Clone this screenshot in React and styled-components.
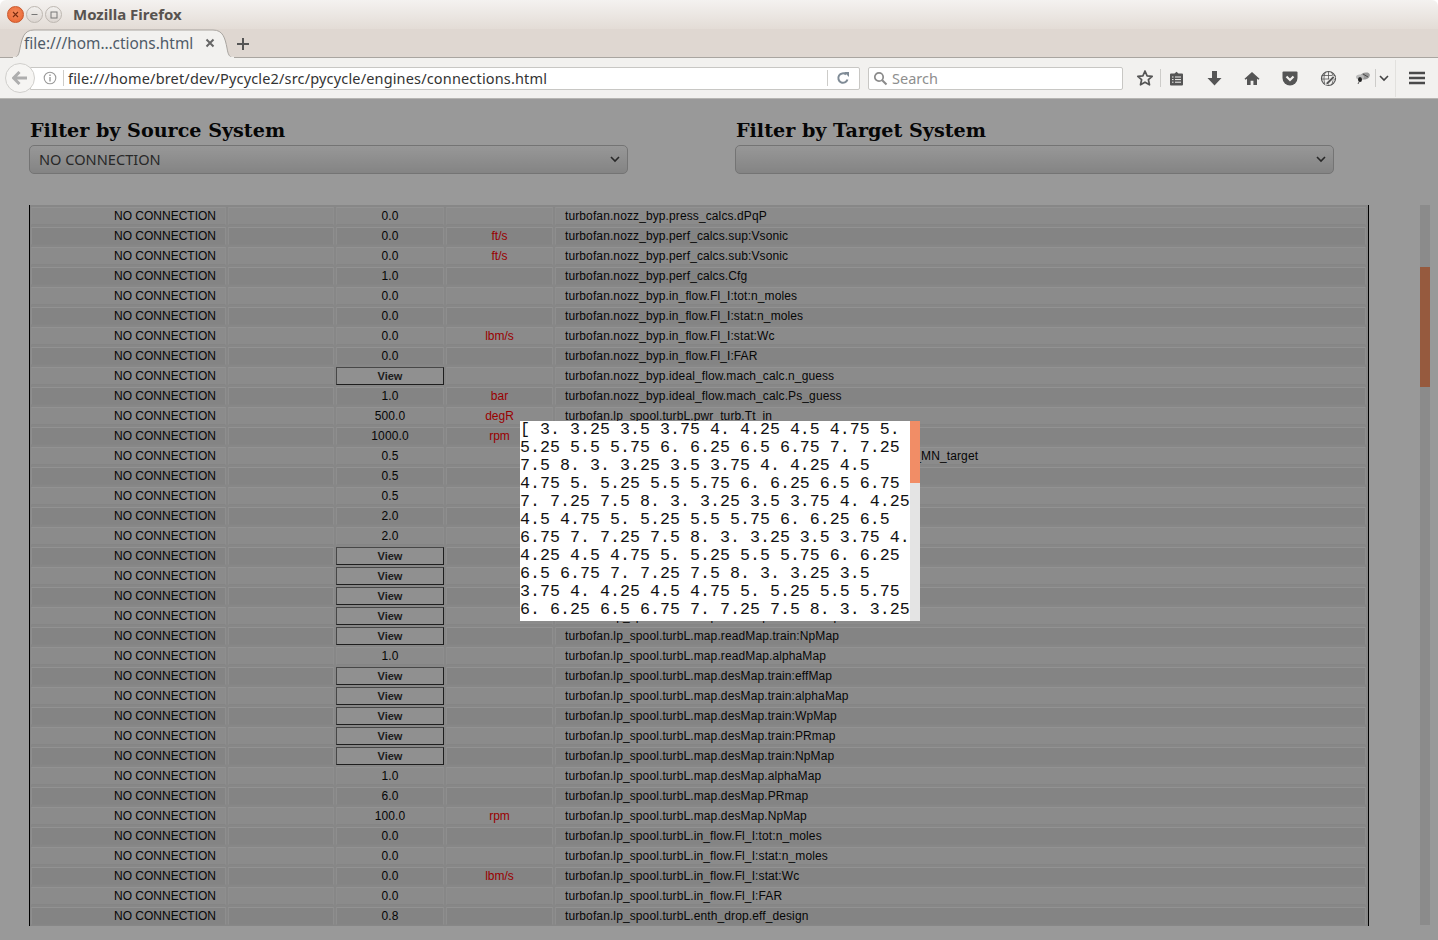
import React from 'react';
import styled, { createGlobalStyle } from 'styled-components';

const Global = createGlobalStyle`
  html, body { margin: 0; padding: 0; background: #fff; overflow: hidden; }
  #root { width: 1438px; height: 940px; }
  * { box-sizing: border-box; }
`;
const UI = '"Noto Sans", "Open Sans", sans-serif';

const Shell = styled.div`width:1438px;height:940px;display:flex;flex-direction:column;overflow:hidden;`;
const TitleBar = styled.div`height:29px;display:flex;align-items:center;padding:0 0 0 7px;background:linear-gradient(#f4f2f0,#e3dcd6);border-radius:6px 6px 0 0;`;
const WinButton = styled.span`width:17px;height:17px;margin-right:2px;border-radius:50%;display:flex;align-items:center;justify-content:center;
  background:${p=>p.$close?'radial-gradient(circle at 50% 40%,#f58a5c,#e8632f)':'linear-gradient(#f2f0ee,#dcd6d1)'};border:1px solid ${p=>p.$close?'#c9562a':'#bdb7b1'};`;
const AppTitle = styled.span`margin-left:9px;padding-bottom:2px;font:700 15px ${UI};color:#57534f;`;
const TabStrip = styled.div`height:29px;background:#dfd7d1;display:flex;align-items:flex-end;padding-left:12px;border-bottom:1px solid #a9a5a0;`;
const Tab = styled.div`position:relative;width:223px;height:29px;margin-bottom:-1px;display:flex;align-items:center;padding:0 20px 1px 12px;`;
const TabShape = styled.svg`position:absolute;left:0;top:0;`;
const TabLabel = styled.span`position:relative;font:15.4px ${UI};color:#4f5b68;flex:1;white-space:nowrap;`;
const TabClose = styled.svg`position:relative;`;
const NewTab = styled.svg`margin:0 0 6px 1px;`;
const NavBar = styled.div`height:41px;background:#f2f1ef;border-bottom:1px solid #b6b5b2;display:flex;align-items:center;padding:0 0 0 5px;`;
const BackButton = styled.div`position:relative;z-index:1;flex:none;width:30px;height:30px;border-radius:50%;background:#f6f5f3;border:1px solid #d0cfcc;display:flex;align-items:center;justify-content:center;`;
const UrlBar = styled.div`flex:none;margin-left:-5px;width:830px;height:23px;background:#fff;border:1px solid #c8c7c4;border-radius:0 2px 2px 0;display:flex;align-items:center;padding-left:12px;`;
const SiteInfo = styled.svg`flex:none;`;
const Divider = styled.span`flex:none;width:1px;height:${p=>p.$h||16}px;background:#cdccc9;margin:${p=>p.$m||'0'};`;
const UrlText = styled.span`flex:1;font:14.5px ${UI};color:#333;white-space:nowrap;letter-spacing:.16px;`;
const Reload = styled.svg`margin:0 9px 0 8px;`;
const SearchBox = styled.div`flex:none;margin-left:8px;width:255px;height:23px;background:#fff;border:1px solid #c8c7c4;border-radius:2px;display:flex;align-items:center;padding-left:4px;gap:4px;`;
const SearchText = styled.span`font:14.5px ${UI};color:#8e8e8e;`;
const Tools = styled.div`flex:none;display:flex;align-items:center;margin-left:5px;`;
const StarSlot = styled.div`width:33px;height:18px;padding-left:2px;display:flex;align-items:center;justify-content:center;border-right:1px solid #cdccc9;`;
const ToolSlot = styled.div`width:30px;height:24px;margin-right:8px;display:flex;align-items:center;justify-content:center;`;
const MothSlot = styled.div`width:25px;height:18px;display:flex;align-items:center;justify-content:center;border-right:1px solid #cdccc9;`;
const ChevronSlot = styled.div`width:20px;height:37px;display:flex;align-items:center;justify-content:flex-start;padding-left:2px;border-right:1px solid #e2e1de;`;
const MenuSlot = styled.div`width:42px;display:flex;align-items:center;justify-content:center;`;

const Page = styled.div`position:relative;flex:1;background:#fff;overflow:hidden;`;
const Filters = styled.div`display:grid;grid-template-columns:599px 599px;column-gap:107px;padding:21px 0 0 29px;height:106px;`;
const FilterGroup = styled.div`display:flex;flex-direction:column;`;
const FilterTitle = styled.h3`margin:0 0 3px 1px;font:700 19.15px/22px "DejaVu Serif",serif;color:#0a0a0a;`;
const Select = styled.div`height:29px;border:1px solid #c2c2c2;border-radius:5px;background:linear-gradient(#fdfdfd,#dcdcdc);display:flex;align-items:center;justify-content:space-between;padding:0 6px 2px 9px;font:14.6px ${UI};color:#444;`;
const Body = styled.div`display:flex;align-items:flex-start;padding-left:29px;gap:51px;`;
const Table = styled.div`width:1340px;height:721px;padding-top:1px;border-left:1px solid #000;border-right:1px solid #000;overflow:hidden;background:#e2e2e2;`;
const Row = styled.div`display:grid;grid-template-columns:195px 106px 108px 107px 811px;column-gap:2px;height:20px;padding-left:1px;`;
const Cell = styled.div`
  height:18px;margin-top:1px;background:${p=>p.$even?'#e8e8e8':'#dcdcdc'};border:1px solid #ededed;border-top-color:#f4f4f4;border-bottom-color:#dedede;
  font:12px/16px "Liberation Sans",Arial,sans-serif;color:${p=>p.$red?'#f00':'#0a0a0a'};white-space:nowrap;overflow:visible;
  letter-spacing:${p=>p.$wide?'.11px':'0'};
  text-align:${p=>p.$align||'center'};padding:${p=>p.$pad||'0'};
`;
const ViewButton = styled.div`height:18px;margin-top:1px;background:#f0f0f0;border:1px solid #333;border-top-color:#777;border-left-color:#777;text-align:center;font:700 11px/16px "Liberation Sans",Arial,sans-serif;color:#333;`;
const PageScroll = styled.div`position:relative;width:10px;height:720px;background:#e8e8e8;`;
const PageThumb = styled.div`position:absolute;left:0;top:62px;width:10px;height:120px;background:#fa9768;`;
const Overlay = styled.div`position:absolute;inset:0;background:rgba(0,0,0,.4);`;
const Modal = styled.div`position:absolute;left:520px;top:322px;width:400px;height:200px;background:#fff;display:flex;overflow:hidden;`;
const ModalText = styled.div`width:390px;height:200px;overflow:hidden;font:16.67px/18px "Liberation Mono",monospace;color:#111;white-space:normal;`;
const ModalTrack = styled.div`width:10px;height:200px;background:#e4e4e4;`;
const ModalThumb = styled.div`width:10px;height:62px;background:#f18d66;`;

const N='NO CONNECTION';
const P='turbofan.nozz_byp.', L='turbofan.lp_spool.turbL.';
const rows=[
['0.0','',P+'press_calcs.dPqP'],['0.0','ft/s',P+'perf_calcs.sup:Vsonic'],['0.0','ft/s',P+'perf_calcs.sub:Vsonic'],['1.0','',P+'perf_calcs.Cfg'],
['0.0','',P+'in_flow.Fl_I:tot:n_moles'],['0.0','',P+'in_flow.Fl_I:stat:n_moles'],['0.0','lbm/s',P+'in_flow.Fl_I:stat:Wc'],['0.0','',P+'in_flow.Fl_I:FAR'],
['V','',P+'ideal_flow.mach_calc.n_guess'],['1.0','bar',P+'ideal_flow.mach_calc.Ps_guess'],['500.0','degR',L+'pwr_turb.Tt_in'],['1000.0','rpm',L+'pwr_turb.Nmech'],
['0.5','',L+'statics.out_stat.flow_static.mach_calc.ps_MN_target'],['0.5','',L+'map.s_WpDes'],['0.5','',L+'map.s_PRdes'],['2.0','',L+'map.s_effDes'],['2.0','',L+'map.s_NpDes'],
['V','',L+'map.readMap.train:effMap'],['V','',L+'map.readMap.train:alphaMap'],['V','',L+'map.readMap.train:WpMap'],['V','',L+'map.readMap.train:PRmap'],
['V','',L+'map.readMap.train:NpMap'],['1.0','',L+'map.readMap.alphaMap'],['V','',L+'map.desMap.train:effMap'],['V','',L+'map.desMap.train:alphaMap'],['V','',L+'map.desMap.train:WpMap'],['V','',L+'map.desMap.train:PRmap'],['V','',L+'map.desMap.train:NpMap'],
['1.0','',L+'map.desMap.alphaMap'],['6.0','',L+'map.desMap.PRmap'],['100.0','rpm',L+'map.desMap.NpMap'],['0.0','',L+'in_flow.Fl_I:tot:n_moles'],['0.0','',L+'in_flow.Fl_I:stat:n_moles'],['0.0','lbm/s',L+'in_flow.Fl_I:stat:Wc'],['0.0','',L+'in_flow.Fl_I:FAR'],['0.8','',L+'enth_drop.eff_design'],
];
const modalText='[ 3. 3.25 3.5 3.75 4. 4.25 4.5 4.75 5. 5.25 5.5 5.75 6. 6.25 6.5 6.75 7. 7.25 7.5 8. 3. 3.25 3.5 3.75 4. 4.25 4.5 4.75 5. 5.25 5.5 5.75 6. 6.25 6.5 6.75 7. 7.25 7.5 8. 3. 3.25 3.5 3.75 4. 4.25 4.5 4.75 5. 5.25 5.5 5.75 6. 6.25 6.5 6.75 7. 7.25 7.5 8. 3. 3.25 3.5 3.75 4. 4.25 4.5 4.75 5. 5.25 5.5 5.75 6. 6.25 6.5 6.75 7. 7.25 7.5 8. 3. 3.25 3.5 3.75 4. 4.25 4.5 4.75 5. 5.25 5.5 5.75 6. 6.25 6.5 6.75 7. 7.25 7.5 8. 3. 3.25';

const ICON='#555';
const Chevron=()=> <svg width="12" height="8" viewBox="0 0 12 8"><path d="M2 2l4 4 4-4" fill="none" stroke="#444" strokeWidth="1.6"/></svg>;

export default function App(){
  return <Shell><Global/>
    <TitleBar>
      <WinButton $close><svg width="7" height="7" viewBox="0 0 7 7"><path d="M1 1l5 5M6 1L1 6" stroke="#7a2c10" strokeWidth="1.1"/></svg></WinButton>
      <WinButton><svg width="7" height="7" viewBox="0 0 7 7"><path d="M0.5 3.500h6" stroke="#777" strokeWidth="1"/></svg></WinButton>
      <WinButton><svg width="8" height="8" viewBox="0 0 8 8"><rect x="1" y="1" width="6" height="6" fill="none" stroke="#777"/></svg></WinButton>
      <AppTitle>Mozilla Firefox</AppTitle>
    </TitleBar>
    <TabStrip>
      <Tab>
        <TabShape width="223" height="29" viewBox="0 0 223 29"><path d="M0 29c6 0 7-4 8-10 2-10 4-18 14-18h179c10 0 12 8 14 18 1 6 2 10 8 10z" fill="#f2f1ef" stroke="#a9a5a0"/><path d="M1 28.600h221" stroke="#f2f1ef" strokeWidth="1.500"/></TabShape>
        <TabLabel>file:///hom…ctions.html</TabLabel>
        <TabClose width="10" height="10" viewBox="0 0 10 10"><path d="M1.500 1.500l7 7M8.500 1.500l-7 7" stroke="#666" strokeWidth="2"/></TabClose>
      </Tab>
      <NewTab width="14" height="14" viewBox="0 0 14 14"><path d="M7 1v12M1 7h12" stroke="#555" strokeWidth="2"/></NewTab>
    </TabStrip>
    <NavBar>
      <BackButton><svg width="16" height="14" viewBox="0 0 16 14"><path d="M7.500 1L1.500 7l6 6M2 7h13" fill="none" stroke="#aeaeae" strokeWidth="3"/></svg></BackButton>
      <UrlBar>
        <SiteInfo width="14" height="14" viewBox="0 0 14 14"><circle cx="7" cy="7" r="5.800" fill="none" stroke="#999" strokeWidth="1.100"/><path d="M7 6v4.400M7 3.400v1.500" stroke="#999" strokeWidth="1.400"/></SiteInfo>
        <Divider $m="0 4px 0 6px"/>
        <UrlText>file:///home/bret/dev/Pycycle2/src/pycycle/engines/connections.html</UrlText>
        <Divider/>
        <Reload width="14" height="14" viewBox="0 0 14 14"><path d="M11.500 8.500A4.700 4.700 0 1 1 10 3.400" fill="none" stroke="#7f8b96" strokeWidth="2"/><path d="M8 1l5 0 0 5z" fill="#7f8b96"/></Reload>
      </UrlBar>
      <SearchBox>
        <svg width="15" height="15" viewBox="0 0 15 15"><circle cx="6" cy="6" r="4.200" fill="none" stroke="#8a8a8a" strokeWidth="1.700"/><path d="M9.200 9.200l4.300 4.300" stroke="#8a8a8a" strokeWidth="2"/></svg>
        <SearchText>Search</SearchText>
      </SearchBox>
      <Tools>
        <StarSlot><svg width="18" height="18" viewBox="0 0 18 18"><path d="M9 2l2.100 4.800 5.100.5-3.800 3.400 1.100 5.100L9 13.200l-4.500 2.600 1.100-5.100L1.800 7.300l5.100-.5z" fill="none" stroke={ICON} strokeWidth="1.700" strokeLinejoin="round"/></svg></StarSlot>
        <ToolSlot><svg width="15" height="15" viewBox="0 0 15 15"><path d="M1 3.500Q1 2.500 2 2.500h3.500L7.500.8l2 1.700H13q1 0 1 1v10q0 1-1 1H2q-1 0-1-1z" fill={ICON}/><path d="M3 6h1.500M6 6h6M3 8.600h1.500M6 8.600h6M3 11.200h1.500M6 11.200h6" stroke="#f2f1ef" strokeWidth="1"/></svg></ToolSlot>
        <ToolSlot><svg width="15" height="16" viewBox="0 0 15 16"><path d="M5 1h5v7h4.500l-7 7.500L.5 8H5z" fill={ICON}/></svg></ToolSlot>
        <ToolSlot><svg width="16" height="15" viewBox="0 0 16 15"><path d="M8 1L.5 7.800l1.100 1L3 7.700V14h3.600v-4.200h2.800V14H13V7.700l1.400 1.100 1.100-1z" fill={ICON}/></svg></ToolSlot>
        <ToolSlot><svg width="16" height="15" viewBox="0 0 16 15"><path d="M1.500.5h13q1 0 1 1V7a7.500 7.500 0 0 1-15 0V1.500q0-1 1-1z" fill={ICON}/><path d="M4.500 5.500L8 9l3.500-3.500" fill="none" stroke="#f2f1ef" strokeWidth="2.200"/></svg></ToolSlot>
        <ToolSlot><svg width="17" height="17" viewBox="0 0 17 17"><circle cx="8.500" cy="8.500" r="7" fill="none" stroke={ICON} strokeWidth="1.200"/><path d="M1.800 5.500h13.400M1.800 9h13.400M5.500 2c-2 4-2 9 0 13M11.500 2c2 4 2 9 0 13M8.500 1.500v14" fill="none" stroke={ICON} strokeWidth=".8"/><path d="M5 15.500l.8-3.300 7.200-7.200 2.500 2.500-7.200 7.200z" fill="#f2f1ef"/><path d="M6.200 14.400l.5-1.900 6.300-6.300 1.400 1.400-6.300 6.300z" fill={ICON}/></svg></ToolSlot>
        <MothSlot><svg width="16" height="14" viewBox="0 0 16 14"><ellipse cx="10" cy="5" rx="5" ry="3.400" fill="#999" transform="rotate(-18 10 5)"/><ellipse cx="5" cy="6" rx="4" ry="2.500" fill="#bbb"/><ellipse cx="5" cy="8.500" rx="2" ry="2.600" fill="#222"/><path d="M4 11l-1 2M8 3l5 3" stroke="#333" strokeWidth=".8"/></svg></MothSlot>
        <ChevronSlot><Chevron/></ChevronSlot>
        <MenuSlot><svg width="16" height="14" viewBox="0 0 16 14"><path d="M0 2h16M0 7h16M0 12h16" stroke="#4a4a4a" strokeWidth="2.400"/></svg></MenuSlot>
      </Tools>
    </NavBar>
    <Page>
      <Filters>
        <FilterGroup><FilterTitle>Filter by Source System</FilterTitle><Select>NO CONNECTION<Chevron/></Select></FilterGroup>
        <FilterGroup><FilterTitle>Filter by Target System</FilterTitle><Select><span/><Chevron/></Select></FilterGroup>
      </Filters>
      <Body>
        <Table>
          {rows.map((r,i)=>{const even=i%2===0;return <Row key={i}>
            <Cell $even={even} $align="right" $pad="0 9px 0 0">{N}</Cell>
            <Cell $even={even}/>
            {r[0]==='V'?<ViewButton>View</ViewButton>:<Cell $even={even} $wide>{r[0]}</Cell>}
            <Cell $even={even} $red>{r[1]}</Cell>
            <Cell $even={even} $wide $align="left" $pad="0 0 0 9px">{r[2]}</Cell>
          </Row>;})}
        </Table>
        <PageScroll><PageThumb/></PageScroll>
      </Body>
      <Overlay/>
      <Modal>
        <ModalText>{modalText}</ModalText>
        <ModalTrack><ModalThumb/></ModalTrack>
      </Modal>
    </Page>
  </Shell>;
}
